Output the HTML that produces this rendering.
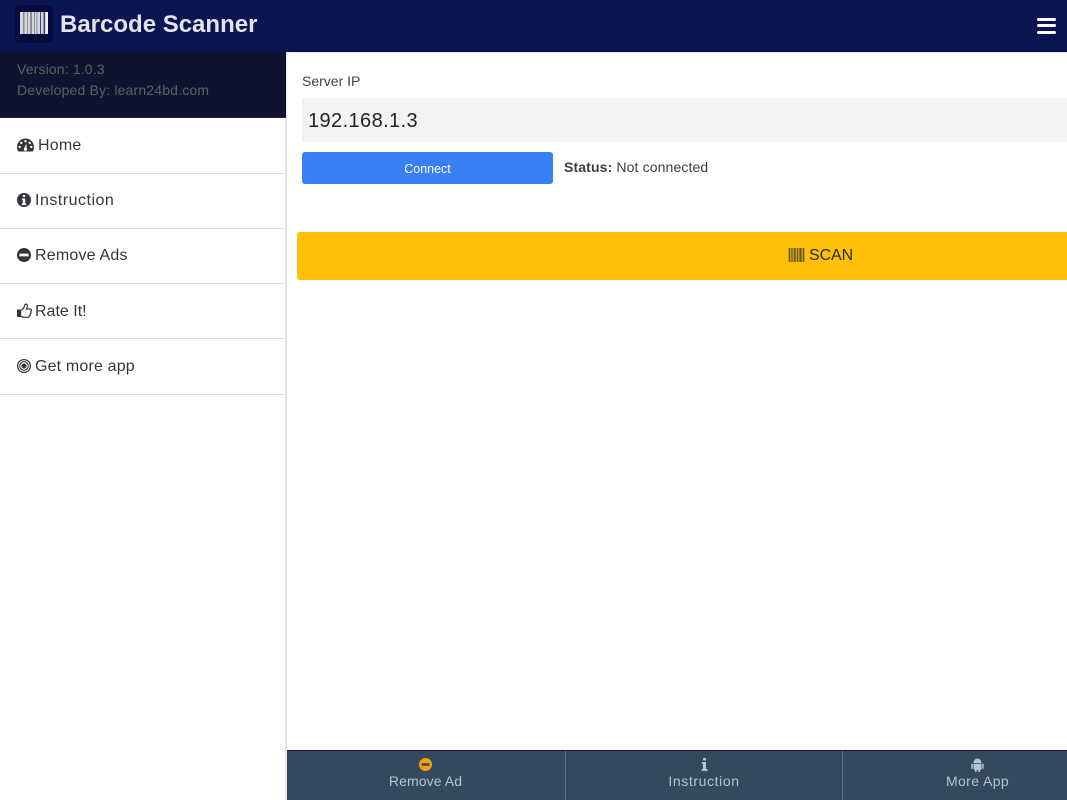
<!DOCTYPE html>
<html>
<head>
<meta charset="utf-8">
<style>
html,body{margin:0;padding:0;background:#fff}
body{width:1067px;height:800px;position:relative;overflow:hidden;font-family:"Liberation Sans",sans-serif;color:#212529}
.a{position:absolute;white-space:nowrap}
.m{position:absolute;left:0;width:286px;height:54px;border-bottom:1px solid #dedede}
.t{position:absolute;font-size:16px;line-height:20px;color:#33373b;white-space:nowrap}
svg{position:absolute;display:block}
</style>
</head>
<body>
<div class="a" style="left:0;top:0;width:1067px;height:52px;background:#0a1551"></div>
<div class="a" style="left:0;top:52px;width:1067px;height:1px;background:#e6e6e6"></div>
<div class="a" style="left:15px;top:5px;width:38px;height:38px;border-radius:5px;background:#050c3a"></div>
<svg style="left:20px;top:12px" width="28" height="22" viewBox="0 0 28 22"><rect width="28" height="22" fill="#d6d6de"/><g fill="#8a8a98"><rect x="3" width="1.500" height="22"/><rect x="7" width="1" height="22"/><rect x="10" width="2" height="22"/><rect x="14" width="1" height="22"/><rect x="16.500" width="1" height="22"/></g><g fill="#3d4370"><rect x="20" width="1" height="22"/><rect x="23.500" width="1.500" height="22"/></g><rect x="26" width="2" height="22" fill="#f0f0f4"/></svg>
<div class="a" style="left:60px;top:10px;font-size:24px;line-height:30px;font-weight:bold;color:#e3e3ec">Barcode Scanner</div>
<div class="a" style="left:1037px;top:18px;width:19px;height:3px;background:#fff;border-radius:2px"></div>
<div class="a" style="left:1037px;top:24px;width:19px;height:3px;background:#fff;border-radius:2px"></div>
<div class="a" style="left:1037px;top:31px;width:19px;height:3px;background:#fff;border-radius:2px"></div>

<div class="a" style="left:285px;top:53px;width:2px;height:747px;background:#e4e4e4"></div>
<div class="a" style="left:0;top:52px;width:286px;height:65px;background:#0e1330;border-bottom:1px solid #222"></div>
<div class="a" style="left:17px;top:60px;font-size:14px;line-height:18px;color:#5f6064;letter-spacing:.15px">Version: 1.0.3</div>
<div class="a" style="left:17px;top:81px;font-size:14px;line-height:18px;color:#5f6064;letter-spacing:.17px">Developed By: learn24bd.com</div>

<div class="m" style="top:119px;width:285px"></div>
<div class="m" style="top:174px;width:285px"></div>
<div class="m" style="top:229px;width:285px"></div>
<div class="m" style="top:284px;width:285px"></div>
<div class="m" style="top:340px;width:285px"></div>

<svg style="left:17px;top:138px" width="17" height="14" viewBox="0 0 17 14"><path fill="#33373b" fill-rule="evenodd" d="M8.5 0.5C3.8 0.5 0 4.2 0 9c0 1.800.5 3.300 1.400 4.500h14.200C16.500 12.300 17 10.800 17 9 17 4.200 13.200.5 8.500.5zM8.500 2a1.200 1.200 0 1 1 0 2.400 1.200 1.200 0 0 1 0-2.400zM4.300 3.700a1.200 1.200 0 1 1 0 2.400 1.200 1.200 0 0 1 0-2.400zM12.700 3.700a1.200 1.200 0 1 1 0 2.400 1.200 1.200 0 0 1 0-2.400zM2.700 7.800a1.200 1.200 0 1 1 0 2.400 1.200 1.200 0 0 1 0-2.400zM14.300 7.800a1.200 1.200 0 1 1 0 2.400 1.200 1.200 0 0 1 0-2.400zM9.300 5.500L9.500 9.800a1.700 1.700 0 1 1-2 0z"/></svg>
<div class="t" style="left:38px;top:136px;letter-spacing:.2px">Home</div>

<svg style="left:17px;top:193px" width="14" height="14" viewBox="0 0 14 14"><path fill="#33373b" fill-rule="evenodd" d="M7 0a7 7 0 1 0 0 14A7 7 0 0 0 7 0zM5.800 2h2.400v2H5.800zM5 5.500h3.200v5H9.200V12H4.800v-1.500h1V7H5z"/></svg>
<div class="t" style="left:35px;top:191px;letter-spacing:.5px">Instruction</div>

<svg style="left:17px;top:248px" width="14" height="14" viewBox="0 0 14 14"><path fill="#33373b" fill-rule="evenodd" d="M7 0a7 7 0 1 0 0 14A7 7 0 0 0 7 0zM2.500 5.600h9v2.800h-9z"/></svg>
<div class="t" style="left:35px;top:246px;letter-spacing:.2px">Remove Ads</div>

<svg style="left:17px;top:303px" width="15" height="15" viewBox="0 0 15 15"><rect x="0" y="6.500" width="3" height="7.500" fill="#33373b"/><path fill="none" stroke="#33373b" stroke-width="1.200" d="M3.600 7.200C6 6.500 7.200 4.500 7.600 2.500 7.800 1 9.800.5 10.300 2.200c.4 1.400-.3 2.800-.7 3.800h3.400c1.800 0 1.700 2 .7 2.500.7 1 .3 2-.5 2.400.3 1-.2 1.800-1 2 .1 1-.7 1.400-1.500 1.400H7.500c-1.500 0-2.400-.6-3.900-.8z"/></svg>
<div class="t" style="left:35px;top:302px">Rate It!</div>

<svg style="left:17px;top:359px" width="14" height="14" viewBox="0 0 14 14"><circle cx="7" cy="7" r="6.400" fill="none" stroke="#33373b" stroke-width="1.200"/><circle cx="7" cy="7" r="4.300" fill="none" stroke="#33373b" stroke-width="1.100"/><circle cx="7" cy="7" r="2.500" fill="#33373b"/></svg>
<div class="t" style="left:35px;top:357px;letter-spacing:.17px">Get more app</div>

<div class="a" style="left:302px;top:72px;font-size:14px;line-height:18px;color:#3f4347">Server IP</div>
<div class="a" style="left:302px;top:98px;width:765px;height:44px;background:#f3f3f3"></div>
<div class="a" style="left:308px;top:109px;font-size:20px;line-height:24px;color:#1f2226;letter-spacing:.4px">192.168.1.3</div>
<div class="a" style="left:302px;top:152px;width:251px;height:32px;background:#387ef5;border-radius:3px;color:#fff;font-size:12.500px;line-height:34px;text-align:center">Connect</div>
<div class="a" style="left:564px;top:158px;font-size:14px;line-height:18px;color:#3a3d41;letter-spacing:.13px"><b>Status:</b> Not connected</div>

<div class="a" style="left:297px;top:232px;width:770px;height:48px;background:#ffc107;border-radius:3px 0 0 3px"></div>
<svg style="left:788px;top:248px" width="17" height="14" viewBox="0 0 17 14"><rect width="17" height="14" fill="#c49a14"/><g fill="#6d5a14"><rect x="1" width="1" height="14"/><rect x="3.500" width="1" height="14"/><rect x="6" width="1.500" height="14"/><rect x="9" width="1" height="14"/><rect x="11.500" width="2" height="14"/><rect x="15" width="1" height="14"/></g></svg>
<div class="a" style="left:809px;top:246px;font-size:16px;line-height:20px;color:#2a2a20;letter-spacing:-.1px">SCAN</div>

<div class="a" style="left:287px;top:750px;width:780px;height:50px;background:#34495e;border-top:1px solid #101a38;box-sizing:border-box"></div>
<div class="a" style="left:565px;top:751px;width:1px;height:49px;background:#4f7cab"></div>
<div class="a" style="left:842px;top:751px;width:1px;height:49px;background:#4f7cab"></div>
<svg style="left:419px;top:758px" width="13" height="13" viewBox="0 0 13 13"><path fill="#f5a010" fill-rule="evenodd" d="M6.500 0a6.500 6.500 0 1 0 0 13 6.500 6.500 0 0 0 0-13zM2.500 5.300h8v2.400h-8z"/></svg>
<div class="a" style="left:287px;top:772px;width:277px;text-align:center;font-size:14px;line-height:18px;color:#b6c4d4;letter-spacing:.1px">Remove Ad</div>
<svg style="left:701px;top:758px" width="7" height="13" viewBox="0 0 7 13"><path fill="#b6c4d4" d="M2 0h3v2.500H2zM.8 4h4.200v7H6.500v2H.5v-2h1.500V6H.8z"/></svg>
<div class="a" style="left:566px;top:772px;width:276px;text-align:center;font-size:14px;line-height:18px;color:#b6c4d4;letter-spacing:.6px">Instruction</div>
<svg style="left:971px;top:758px" width="13" height="14" viewBox="0 0 13 14"><path fill="#b6c4d4" d="M2.500 5C2.600 2.500 4.300.5 6.500.5S10.400 2.500 10.500 5zM2.500 5.700h8V11a1 1 0 0 1-1 1H9v2H7.300v-2H5.700v2H4v-2h-.5a1 1 0 0 1-1-1zM.3 5.700h1.500v5H.3zM11.200 5.700h1.500v5h-1.500z"/></svg>
<div class="a" style="left:888px;top:772px;width:179px;text-align:center;font-size:14px;line-height:18px;color:#b6c4d4;letter-spacing:.4px">More App</div>
</body>
</html>
